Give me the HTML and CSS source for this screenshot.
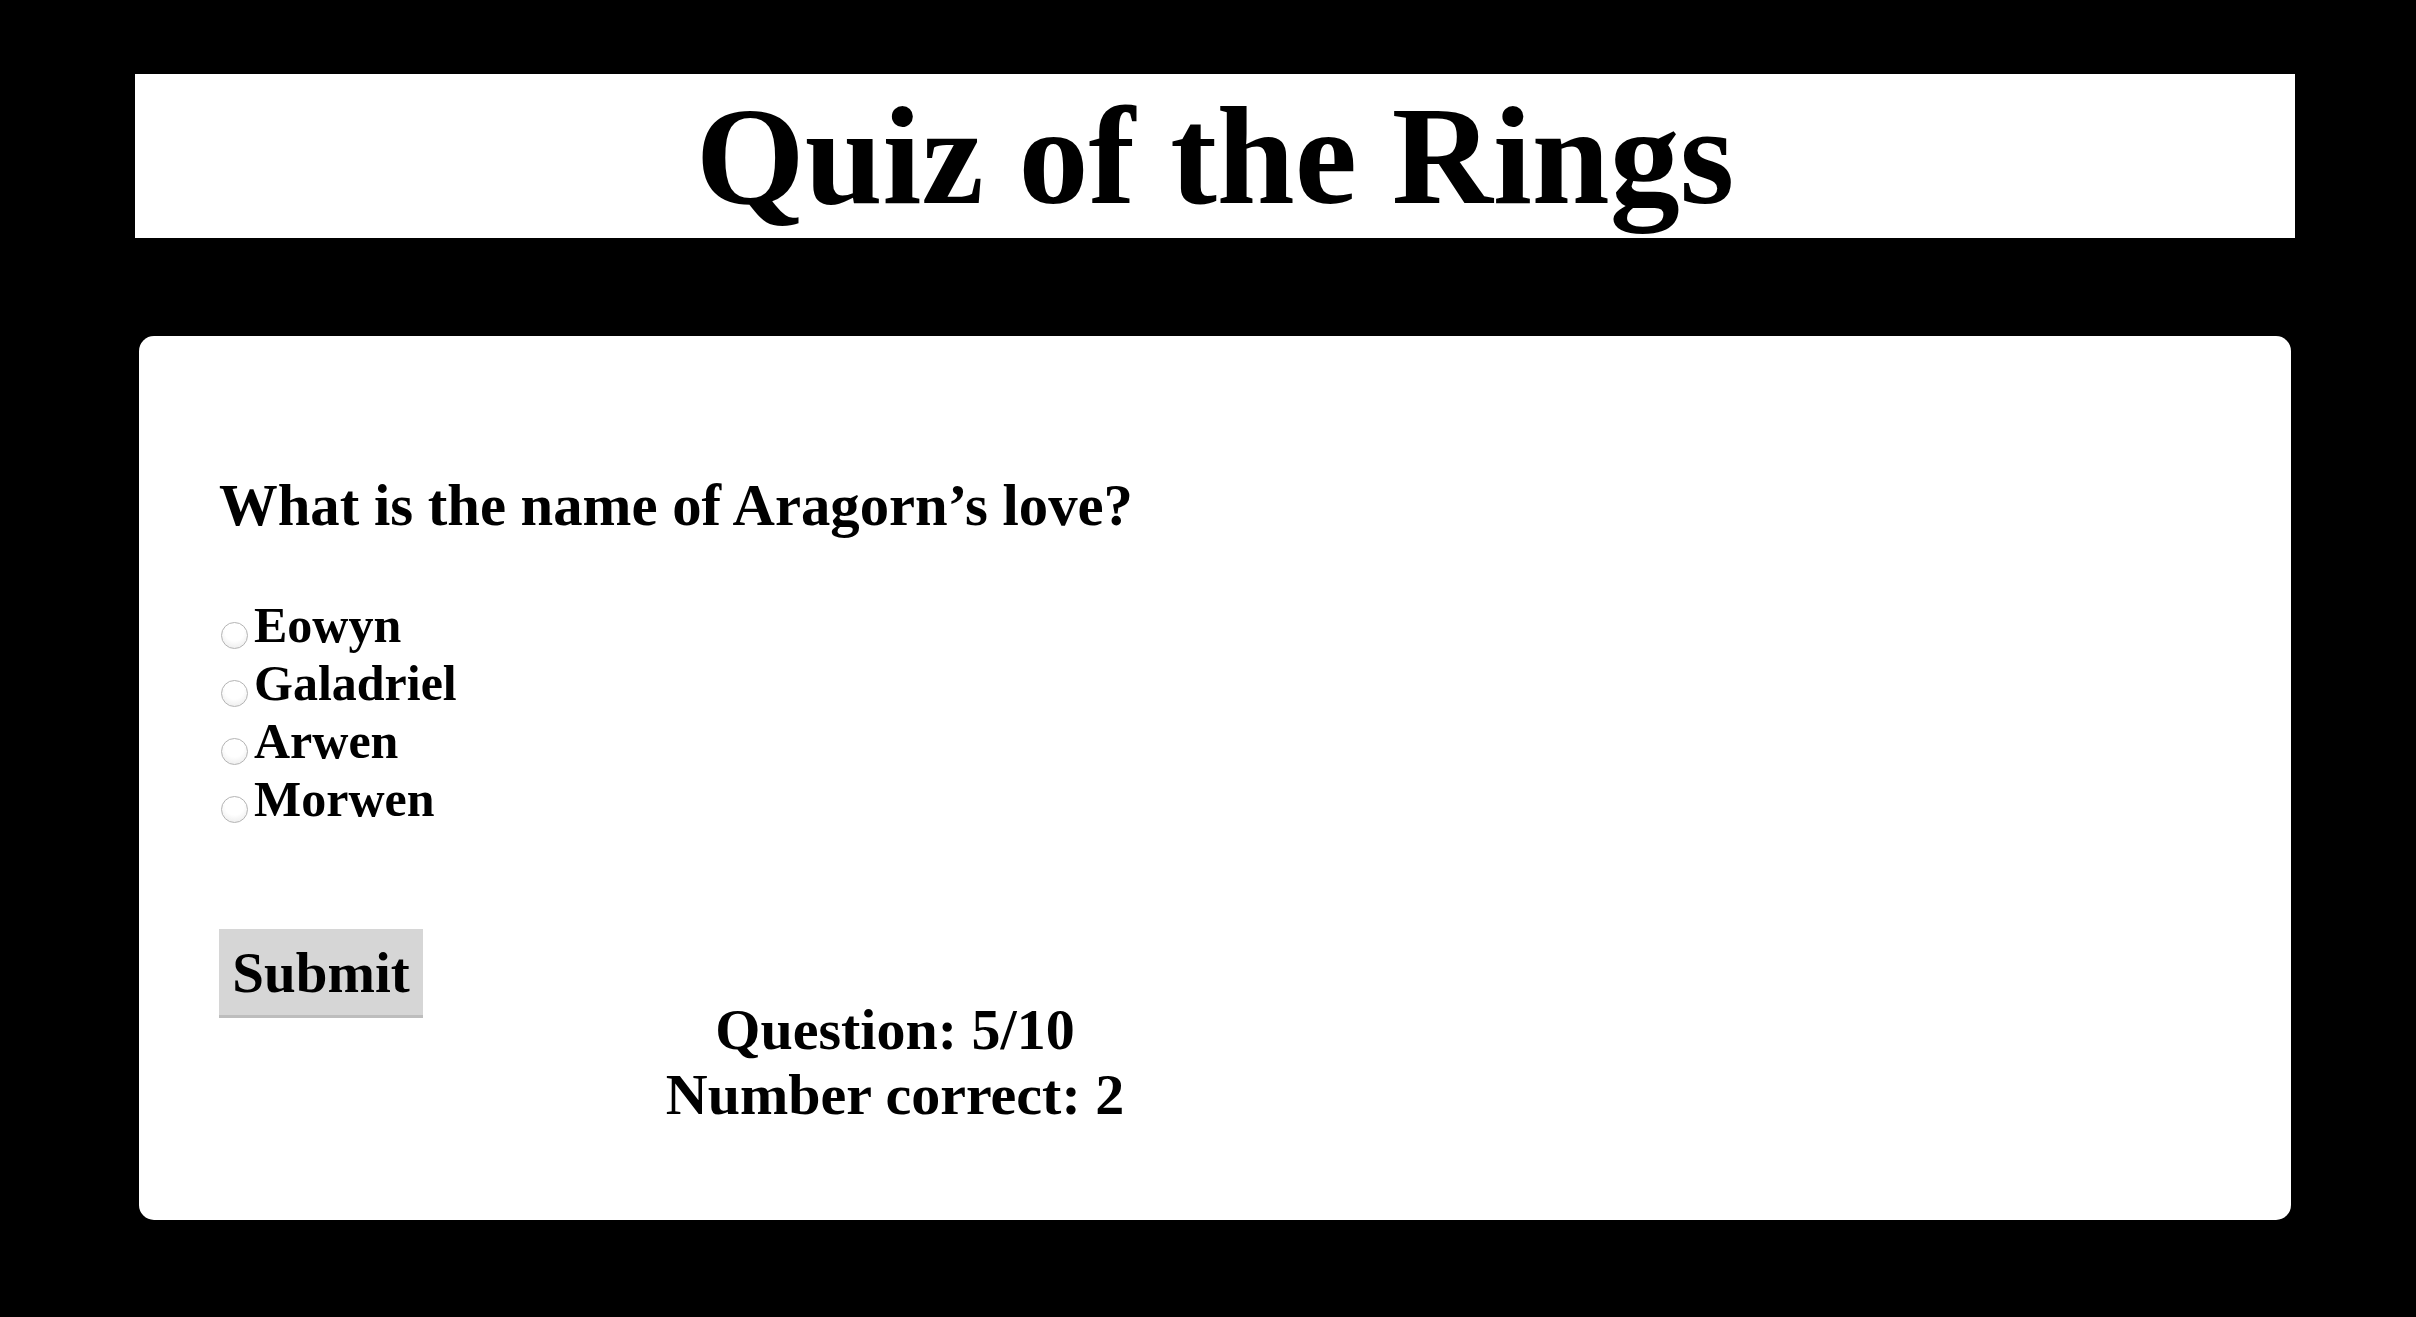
FILE: index.html
```html
<!DOCTYPE html>
<html lang="en">
<head>
<meta charset="utf-8">
<title>Quiz of the Rings</title>
<link rel="stylesheet" href="styles.css">
</head>
<body>
  <header class="banner">
    <h1 class="banner-title">Quiz of the Rings</h1>
  </header>
  <main class="card">
    <form class="quiz">
      <h2 class="question">What is the name of Aragorn’s love?</h2>
      <div class="options">
        <label class="option"><input class="radio" type="radio" name="answer" value="Eowyn">Eowyn</label>
        <label class="option"><input class="radio" type="radio" name="answer" value="Galadriel">Galadriel</label>
        <label class="option"><input class="radio" type="radio" name="answer" value="Arwen">Arwen</label>
        <label class="option"><input class="radio" type="radio" name="answer" value="Morwen">Morwen</label>
      </div>
      <div class="footer">
        <button class="submit" type="button">Submit</button>
        <div class="stats">
          <div class="stat">Question: 5/10</div>
          <div class="stat">Number correct: 2</div>
        </div>
      </div>
    </form>
  </main>
</body>
</html>
```
FILE: styles.css
```css
html, body {
  margin: 0;
  padding: 0;
  background: #000;
}

body {
  font-family: "Liberation Serif", "Times New Roman", serif;
  font-weight: bold;
  color: #000;
  padding: 74px 121px 98px 135px;
}

.banner {
  background: #fff;
  height: 164px;
}

.banner-title {
  margin: 0;
  font-size: 140px;
  line-height: 164px;
  text-align: center;
  font-weight: bold;
}

.card {
  background: #fff;
  border-radius: 15px;
  margin: 98px 4px 0 4px;
  padding: 137px 80px 93px 80px;
}

.quiz {
  margin: 0;
}

.question {
  margin: 0 0 57px 0;
  font-size: 58.7px;
  line-height: 66px;
  font-weight: bold;
}

.options {
  display: flex;
  flex-direction: column;
}

.option {
  display: block;
  font-size: 50px;
  line-height: 58px;
}

.radio {
  appearance: none;
  -webkit-appearance: none;
  width: 27px;
  height: 27px;
  margin: 0 6px 0 2px;
  border: 1.5px solid #b4b4b4;
  border-radius: 50%;
  background: radial-gradient(circle at 50% 35%, #ffffff 45%, #f1f1f1 75%, #e2e2e2 100%);
  vertical-align: -7px;
  box-sizing: border-box;
}

.footer {
  display: flex;
  align-items: flex-start;
  margin-top: 101px;
}

.submit {
  flex: none;
  width: 204px;
  height: 89px;
  padding: 11px 0 0 0;
  margin: 0;
  border: none;
  border-bottom: 3px solid #bdbdbd;
  background: #d6d6d6;
  font-family: "Liberation Serif", "Times New Roman", serif;
  font-weight: bold;
  font-size: 57px;
  line-height: 66px;
  color: #000;
  text-align: center;
  box-sizing: border-box;
  display: flex;
  align-items: flex-start;
  justify-content: center;
}

.stats {
  flex: none;
  width: 944px;
  margin-top: 68px;
  text-align: center;
  font-size: 58px;
  line-height: 65px;
}
```
